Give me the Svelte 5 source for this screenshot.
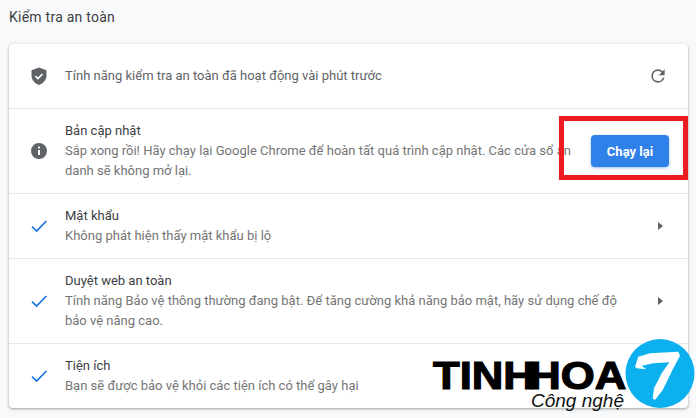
<script>
  const rows = [
    { title: 'Mật khẩu', text: 'Không phát hiện thấy mật khẩu bị lộ' },
    {
      title: 'Duyệt web an toàn',
      text: 'Tính năng Bảo vệ thông thường đang bật. Để tăng cường khả năng bảo mật, hãy sử dụng chế độ bảo vệ nâng cao.',
      tall: true
    },
    { title: 'Tiện ích', text: 'Bạn sẽ được bảo vệ khỏi các tiện ích có thể gây hại', noArrow: true }
  ];
</script>

<div class="page">
  <h2 class="heading">Kiểm tra an toàn</h2>

  <section class="card">
    <div class="row short">
      <div class="icon">
        <svg width="24" height="24" viewBox="0 0 24 24">
          <path fill="#5f6368" d="M12 3.5 4.5 6.3v5.3c0 4.4 3.1 8.1 7.5 9.4 4.4-1.3 7.5-5 7.5-9.4V6.3z" />
          <path fill="none" stroke="#fff" stroke-width="1.7" d="M8.4 12.2l2.5 2.4 4.6-4.6" />
        </svg>
      </div>
      <div class="body single">Tính năng kiểm tra an toàn đã hoạt động vài phút trước</div>
      <button class="icon-btn" aria-label="Chạy lại">
        <svg width="20" height="20" viewBox="0 0 24 24">
          <path fill="#5f6368" d="M17.65 6.35A7.96 7.96 0 0 0 12 4a8 8 0 1 0 7.73 10h-2.08A6 6 0 1 1 12 6c1.66 0 3.14.69 4.22 1.78L13 11h7V4z" />
        </svg>
      </button>
    </div>

    <div class="row update">
      <div class="icon">
        <svg width="24" height="24" viewBox="0 0 24 24">
          <path fill="#5f6368" d="M12 4a8 8 0 1 0 0 16 8 8 0 0 0 0-16zm1 12h-2v-5h2zm0-6.5h-2v-2h2z" />
        </svg>
      </div>
      <div class="body">
        <div class="title">Bản cập nhật</div>
        <div class="sub">Sắp xong rồi! Hãy chạy lại Google Chrome để hoàn tất quá trình cập nhật. Các cửa sổ ẩn danh sẽ không mở lại.</div>
      </div>
      <button class="primary">Chạy lại</button>
      <div class="highlight"></div>
    </div>

    {#each rows as row}
      <div class="row" class:tall={row.tall}>
        <div class="icon">
          <svg width="24" height="24" viewBox="0 0 24 24">
            <path fill="none" stroke="#1a73e8" stroke-width="1.7" d="M5 12.6l4.6 4.4L19.4 7" />
          </svg>
        </div>
        <div class="body">
          <div class="title">{row.title}</div>
          <div class="sub">{row.text}</div>
        </div>
        {#if !row.noArrow}
          <span class="arrow"></span>
        {/if}
      </div>
    {/each}
  </section>

  <div class="logo">
    <span class="logo-name">TIN<span class="tight">H</span>HOA</span>
    <span class="logo-sub">Công nghệ</span>
    <svg class="logo-mark" width="70" height="70" viewBox="0 0 70 70">
      <circle cx="35" cy="34.5" r="34.5" fill="#0cb0ef" />
      <path fill="#fff" d="M10 27.7 13.3 17.7 25 14.3 53.3 12.7 55 16.7 48.3 29.3 37.7 51 30 61 27.7 59.3 29 49.3 36.7 34.3 44.3 23.3 28.3 24.3 16.7 26.7 21 30.3 11.7 29.3z" />
    </svg>
  </div>
</div>

<style>
  :global(body) {
    margin: 0;
    background: #f8f9fa;
  }

  .page {
    position: relative;
    width: 696px;
    height: 418px;
    overflow: hidden;
    background: #f8f9fa;
    font-family: Roboto, "Noto Sans", sans-serif;
    font-size: 13px;
    line-height: 20px;
    padding: 8px 8px 0 9px;
    box-sizing: border-box;
  }

  .heading {
    margin: 0;
    height: 36px;
    font-size: 14px;
    font-weight: 400;
    line-height: 18px;
    color: #3c4043;
    letter-spacing: 0.25px;
  }

  .card {
    width: 679px;
    background: #fff;
    border-radius: 4px;
    box-shadow: 0 1px 2px rgba(60, 64, 67, 0.3), 0 1px 3px 1px rgba(60, 64, 67, 0.15);
  }

  .row {
    position: relative;
    display: flex;
    align-items: center;
    height: 64px;
    padding: 0 20px 0 18px;
    border-top: 1px solid #e8eaed;
  }

  .row.short {
    border-top: 0;
  }

  .row.update,
  .row.tall {
    height: 84px;
  }

  .icon {
    display: flex;
    width: 24px;
    height: 24px;
    flex: none;
    margin-right: 14px;
  }

  .body {
    flex: 1;
    min-width: 0;
    color: #202124;
  }

  .body.single {
    color: #5f6368;
  }

  .title {
    color: #3c4043;
  }

  .sub {
    color: #757575;
    max-width: 565px;
  }

  .icon-btn {
    display: flex;
    padding: 0;
    border: 0;
    background: none;
  }

  .primary {
    position: relative;
    flex: none;
    width: 78px;
    height: 32px;
    margin-right: -1px;
    border: 0;
    border-radius: 4px;
    background: #2f80e8;
    color: #fff;
    font: 700 13px Roboto, sans-serif;
    box-shadow: 0 1px 3px rgba(47, 128, 232, 0.5);
  }

  .highlight {
    position: absolute;
    left: 550px;
    top: 7px;
    width: 119px;
    height: 54px;
    border: 5px solid #ed1c24;
    pointer-events: none;
  }

  .arrow {
    width: 0;
    height: 0;
    margin-right: 5px;
    border-left: 5px solid #5f6368;
    border-top: 4px solid transparent;
    border-bottom: 4px solid transparent;
  }

  .logo {
    position: absolute;
    left: 433px;
    top: 339px;
    width: 261px;
    height: 70px;
  }

  .logo-name {
    position: absolute;
    left: 0;
    top: 23px;
    font-family: "Liberation Sans", sans-serif;
    font-weight: 700;
    font-size: 39px;
    line-height: 28px;
    color: #000;
    transform: scaleX(1.12);
    transform-origin: left;
    -webkit-text-stroke: 1.2px #000;
  }

  .tight {
    letter-spacing: -5px;
  }

  .logo-sub {
    position: absolute;
    left: 98px;
    top: 53px;
    font-family: "Liberation Sans", sans-serif;
    font-style: italic;
    font-size: 19px;
    line-height: 18px;
    color: #111;
  }

  .logo-mark {
    position: absolute;
    left: 192px;
    top: 0;
  }
</style>
